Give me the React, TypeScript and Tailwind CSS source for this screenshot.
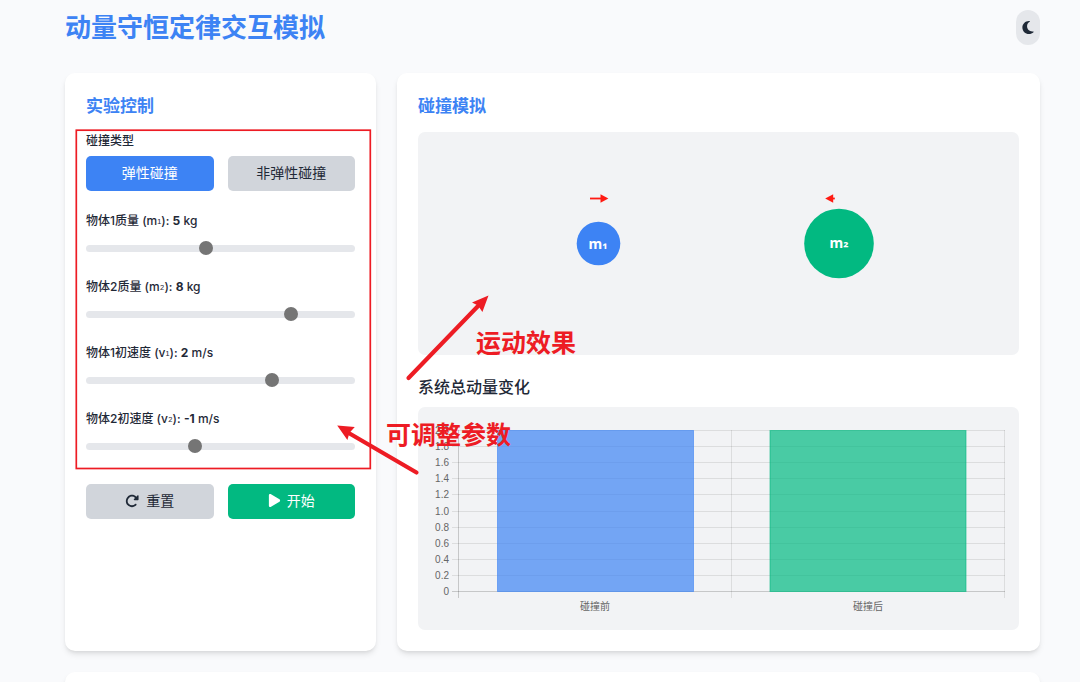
import React, { useState } from 'react';
import { FaMoon, FaPlay, FaRotateRight } from 'react-icons/fa6';

interface SliderFieldProps {
  id: string;
  name: string;
  symbol: string;
  index: string;
  unit: string;
  min: number;
  max: number;
  value: number;
  onChange: (value: number) => void;
}

const SliderField: React.FC<SliderFieldProps> = ({
  id,
  name,
  symbol,
  index,
  unit,
  min,
  max,
  value,
  onChange
}) => {
  return (
    <div className="mb-[18px]">
      <label htmlFor={id} className="mb-[7px] block text-[12px] leading-[17px] font-medium">
        {name} ({symbol}
        <span className="align-[2px] font-['Noto_Sans_CJK_SC',sans-serif] leading-none font-normal">{index}</span>
        ): <span className="font-bold">{value}</span> {unit}
      </label>
      <div className="flex h-6 items-center">
        <input
          id={id}
          type="range"
          min={min}
          max={max}
          value={value}
          onChange={(e) => onChange(Number(e.target.value))}
          className="h-[7px] w-full cursor-pointer appearance-none rounded-full bg-[#e5e7eb] [&::-webkit-slider-thumb]:h-[14px] [&::-webkit-slider-thumb]:w-[14px] [&::-webkit-slider-thumb]:appearance-none [&::-webkit-slider-thumb]:rounded-full [&::-webkit-slider-thumb]:bg-[#757575]"
        />
      </div>
    </div>
  );
};

const Simulation: React.FC = () => (
  <svg viewBox="0 0 601 223" className="h-[223px] w-full" role="img" aria-label="碰撞模拟">
    {/* Velocity arrows */}
    <g fill="#ff1a12" stroke="none">
      <rect x="172" y="65.6" width="12" height="1.8" />
      <path d="M182.5 62.2 L190.4 66.5 L182.5 70.8 Z" />
      <rect x="411" y="65.6" width="5.8" height="1.8" />
      <path d="M415.2 62.2 L407.2 66.5 L415.2 70.8 Z" />
    </g>

    {/* Bodies */}
    <circle cx="180.5" cy="111.5" r="21.8" fill="#3d83f4" />
    <circle cx="421" cy="111.5" r="34.8" fill="#02b981" />
    <g
      className="font-['Noto_Sans','Noto_Sans_CJK_SC',sans-serif] text-[14px] font-bold"
      fill="#ffffff"
      textAnchor="middle"
    >
      <text x="180" y="117">
        m<tspan dy="-2">₁</tspan>
      </text>
      <text x="421" y="116">
        m<tspan dy="-2">₂</tspan>
      </text>
    </g>
  </svg>
);

const ticks = ['0', '0.2', '0.4', '0.6', '0.8', '1.0', '1.2', '1.4', '1.6', '1.8', '2.0'];

const MomentumChart: React.FC = () => (
  <svg viewBox="0 0 601 223" className="h-[223px] w-full" role="img" aria-label="系统总动量变化">
    {/* Grid */}
    {ticks.map((tick, i) => {
      const y = Math.round(184 - i * 16.1) + 0.5;
      return (
        <g key={tick}>
          <line x1="34" x2="587" y1={y} y2={y} stroke="#000000" strokeOpacity={i === 0 ? 0.18 : 0.09} />
          <text
            x="31"
            y={y + 3}
            textAnchor="end"
            fill="#666666"
            className="font-['Liberation_Sans',sans-serif] text-[10px]"
          >
            {tick}
          </text>
        </g>
      );
    })}
    <line x1="40.5" x2="40.5" y1="23" y2="191" stroke="#000000" strokeOpacity="0.18" />
    <line x1="313.5" x2="313.5" y1="23" y2="191" stroke="#000000" strokeOpacity="0.09" />
    <line x1="586.5" x2="586.5" y1="23" y2="191" stroke="#000000" strokeOpacity="0.09" />

    {/* Bars */}
    <rect x="79.5" y="23.5" width="196" height="161" fill="#3d83f4" fillOpacity="0.7" stroke="#3d83f4" strokeOpacity="0.6" />
    <rect x="352" y="23.5" width="196" height="161" fill="#02b981" fillOpacity="0.7" stroke="#02b981" strokeOpacity="0.6" />

    <g
      className="font-['Liberation_Sans','Noto_Sans_CJK_SC',sans-serif] text-[10px]"
      fill="#666666"
      textAnchor="middle"
    >
      <text x="177" y="203">碰撞前</text>
      <text x="450" y="203">碰撞后</text>
    </g>
  </svg>
);

// Red callouts drawn over the page
const Annotations: React.FC = () => (
  <svg
    width="1080"
    height="682"
    viewBox="0 0 1080 682"
    className="pointer-events-none absolute top-0 left-0"
    fill="#ed1c24"
  >
    <rect x="76.3" y="130.2" width="294" height="338.3" fill="none" stroke="#ed1c24" strokeWidth="1.7" />

    <line x1="408.5" y1="378" x2="480" y2="304" stroke="#ed1c24" strokeWidth="4.2" strokeLinecap="round" />
    <path d="M488.5 295.5 L472 302.5 L478 305.5 L482.4 312 Z" />

    <line x1="416.5" y1="472.5" x2="347" y2="432" stroke="#ed1c24" strokeWidth="4.2" strokeLinecap="round" />
    <path d="M337.2 425.5 L354.8 427 L349.5 432.8 L347.4 440 Z" />

    <g className="font-['Noto_Sans_CJK_SC',sans-serif] text-[25px] font-bold">
      <text x="476" y="352">运动效果</text>
      <text x="386" y="444">可调整参数</text>
    </g>
  </svg>
);

const buttonBase = 'flex h-[35px] flex-1 items-center justify-center rounded-[5px] pb-[2px] text-[14px]';

const App: React.FC = () => {
  const [elastic, setElastic] = useState(true);
  const [m1, setM1] = useState(5);
  const [m2, setM2] = useState(8);
  const [v1, setV1] = useState(2);
  const [v2, setV2] = useState(-1);

  const reset = () => {
    setM1(5);
    setM2(8);
    setV1(2);
    setV2(-1);
  };

  return (
    <div className="relative h-screen overflow-hidden bg-[#f9fafc] pt-[10px] pr-10 pl-[65px] font-['Inter','Noto_Sans_CJK_SC',sans-serif] text-[#1f2937]">
      {/* Header */}
      <header className="mb-7 flex items-center justify-between">
        <h1 className="text-[26px] leading-[35px] font-bold text-[#3d83f4]">动量守恒定律交互模拟</h1>
        <button
          type="button"
          aria-label="切换主题"
          className="flex h-[35px] w-6 items-center justify-center rounded-full bg-[#e5e7eb]"
        >
          <FaMoon className="h-[15px] w-[12px]" />
        </button>
      </header>

      <main className="grid grid-cols-3 gap-[21px]">
        {/* Controls */}
        <section className="rounded-[10px] bg-white p-[21px] shadow-md">
          <h2 className="mb-[14px] text-[17px] leading-6 font-semibold text-[#3d83f4]">实验控制</h2>

          <div className="mb-[21px]" role="group" aria-labelledby="collision-type">
            <p id="collision-type" className="mb-[7px] text-[12px] leading-[17px] font-medium">
              碰撞类型
            </p>
            <div className="flex gap-[14px]">
              <button
                type="button"
                onClick={() => setElastic(true)}
                className={`${buttonBase} ${elastic ? 'bg-[#3d83f4] text-white' : 'bg-[#d1d5db]'}`}
              >
                弹性碰撞
              </button>
              <button
                type="button"
                onClick={() => setElastic(false)}
                className={`${buttonBase} ${elastic ? 'bg-[#d1d5db]' : 'bg-[#3d83f4] text-white'}`}
              >
                非弹性碰撞
              </button>
            </div>
          </div>

          <SliderField id="m1" name="物体1质量" symbol="m" index="₁" unit="kg" min={1} max={10} value={m1} onChange={setM1} />
          <SliderField id="m2" name="物体2质量" symbol="m" index="₂" unit="kg" min={1} max={10} value={m2} onChange={setM2} />
          <SliderField id="v1" name="物体1初速度" symbol="v" index="₁" unit="m/s" min={-5} max={5} value={v1} onChange={setV1} />
          <SliderField id="v2" name="物体2初速度" symbol="v" index="₂" unit="m/s" min={-5} max={5} value={v2} onChange={setV2} />

          <div className="mt-[26px] flex gap-[14px]">
            <button type="button" onClick={reset} className={`${buttonBase} gap-[7px] bg-[#d1d5db]`}>
              <FaRotateRight className="h-[14px] w-[14px]" />
              重置
            </button>
            <button type="button" className={`${buttonBase} gap-[6px] bg-[#02b981] text-white`}>
              <FaPlay className="h-[15px] w-[13px]" />
              开始
            </button>
          </div>
        </section>

        {/* Simulation and chart */}
        <section className="col-span-2 rounded-[10px] bg-white p-[21px] shadow-md">
          <h2 className="mb-[14px] text-[17px] leading-6 font-semibold text-[#3d83f4]">碰撞模拟</h2>
          <div className="mb-[21px] rounded-[7px] bg-[#f2f3f5]">
            <Simulation />
          </div>
          <h3 className="mb-[9px] text-[16px] leading-[22px] font-medium">系统总动量变化</h3>
          <div className="rounded-[7px] bg-[#f2f3f5]">
            <MomentumChart />
          </div>
        </section>

        <section className="col-span-3 h-40 rounded-[10px] bg-white shadow-md" />
      </main>

      <Annotations />
    </div>
  );
};

export default App;
